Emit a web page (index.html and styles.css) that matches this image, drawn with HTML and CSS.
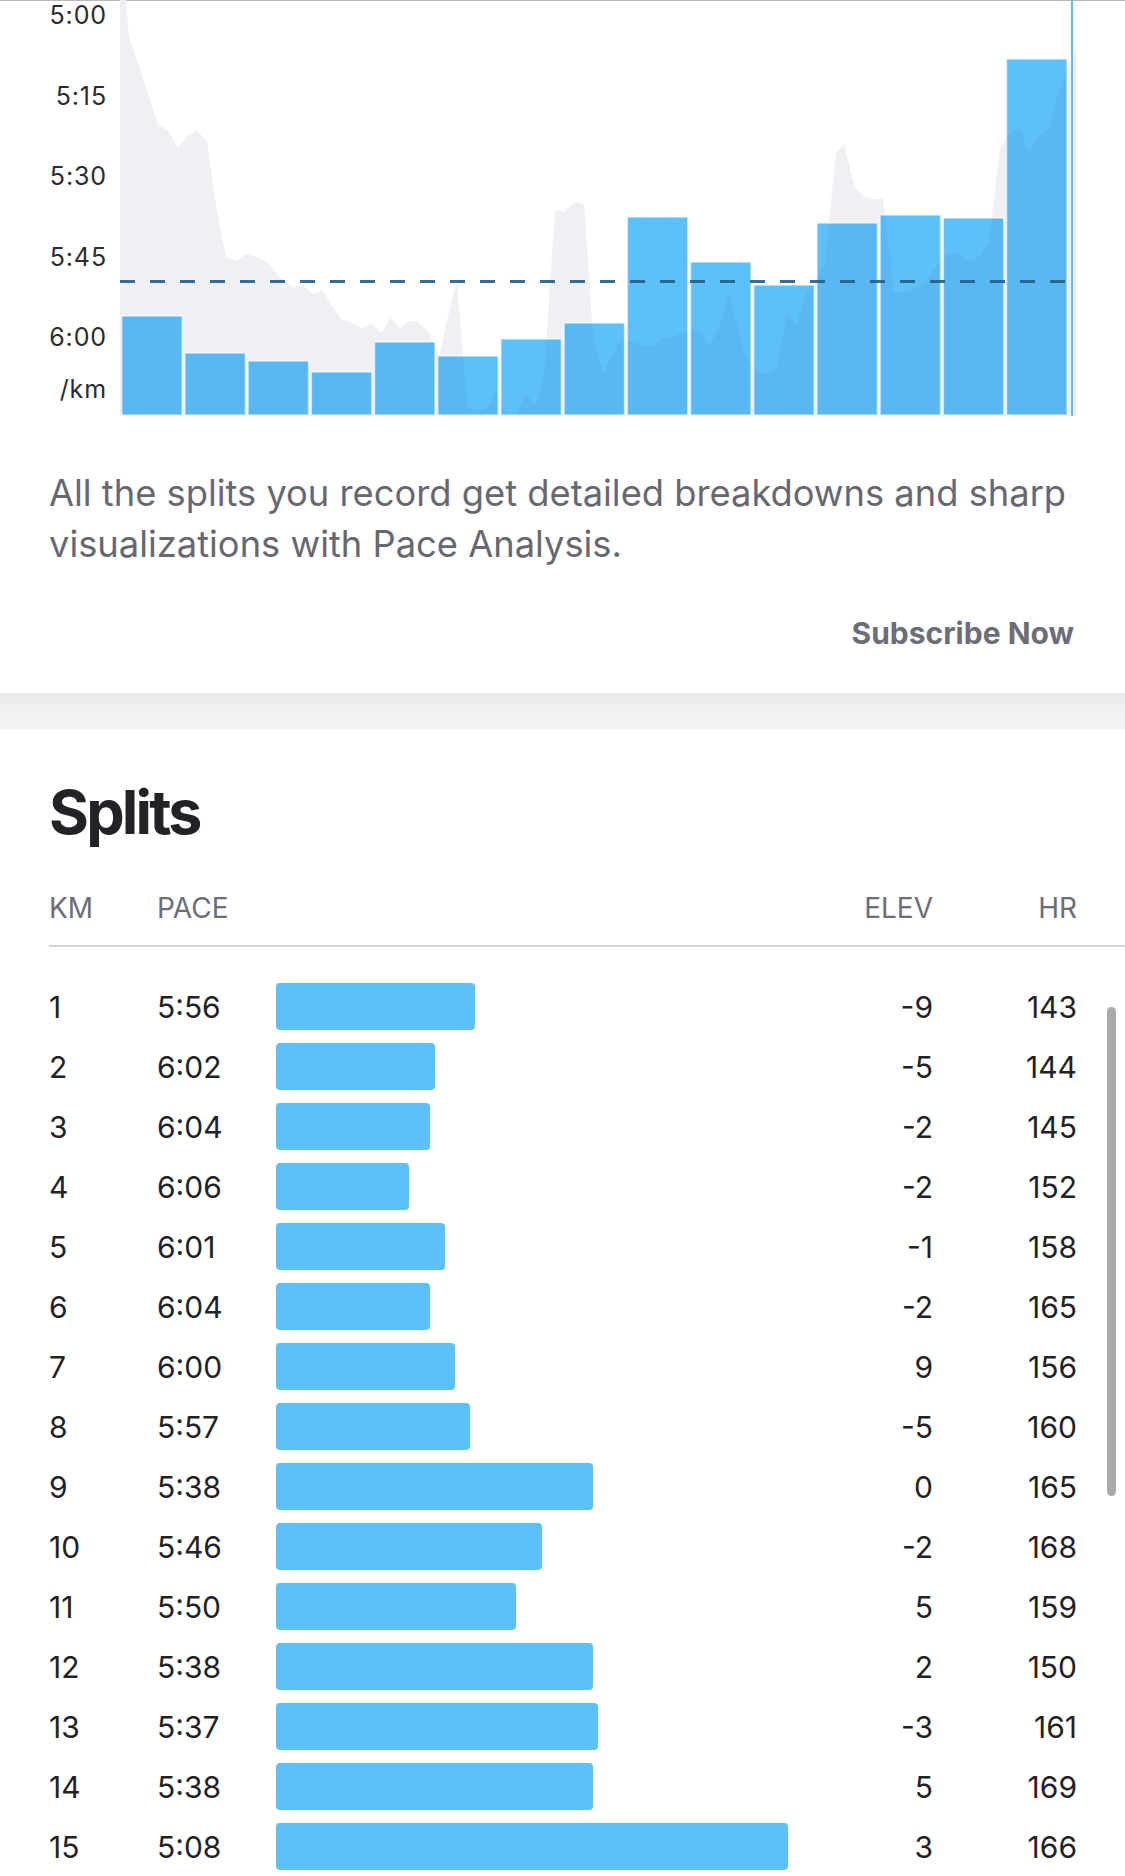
FILE: index.html
```html
<!DOCTYPE html>
<html lang="en">
<head>
<meta charset="utf-8">
<title>Pace Analysis – Splits</title>
<link rel="stylesheet" href="styles.css">
</head>
<body>
<section class="analysis">
  <div class="chart">
    <div class="yaxis">
      <div class="ylabel">5:00</div>
      <div class="ylabel">5:15</div>
      <div class="ylabel">5:30</div>
      <div class="ylabel">5:45</div>
      <div class="ylabel">6:00</div>
      <div class="ylabel unit">/km</div>
    </div>
    <svg class="plot" width="960" height="417" viewBox="0 0 960 417">
      <polygon class="area" points="0,0 6,0 9,37 17,60 27,90 38,125 48,130 58,148 68,135 77,130 87,142 97,212 106,257 116,261 126,254 137,257 147,262 160,277 173,288 183,285 193,294 202,290 212,305 222,320 232,323 242,328 252,324 262,333 270,318 280,328 289,321 298,321 309,333 319,357 330,308 337,282 347,407 359,411 367,407 377,390 386,416 396,416 406,393 415,406 424,378 429,300 435,211 444,211 455,202 464,204 473,337 483,373 494,352 502,337 511,342 532,347 541,338 553,337 571,328 580,331 589,347 599,327 609,294 623,348 634,370 645,374 657,368 667,312 676,325 687,292 693,287 705,262 716,153 724,144 735,188 745,197 754,199 763,199 774,292 785,292 795,289 805,283 814,268 826,254 839,254 851,261 860,256 869,242 880,147 888,135 900,128 908,153 919,136 930,127 936,100 956,49 956,416 0,416"/>
      <g class="bars">
        <rect x="1.7" y="316" width="60.5" height="99"/>
        <rect x="64.9" y="353" width="60.5" height="62"/>
        <rect x="128.1" y="361" width="60.5" height="54"/>
        <rect x="191.3" y="372" width="60.5" height="43"/>
        <rect x="254.5" y="342" width="60.5" height="73"/>
        <rect x="317.7" y="356" width="60.5" height="59"/>
        <rect x="380.9" y="339" width="60.5" height="76"/>
        <rect x="444.1" y="323" width="60.5" height="92"/>
        <rect x="507.3" y="217" width="60.5" height="198"/>
        <rect x="570.5" y="262" width="60.5" height="153"/>
        <rect x="633.7" y="285" width="60.5" height="130"/>
        <rect x="696.9" y="223" width="60.5" height="192"/>
        <rect x="760.1" y="215" width="60.5" height="200"/>
        <rect x="823.3" y="218" width="60.5" height="197"/>
        <rect x="886.5" y="59" width="60.5" height="356"/>
      </g>
      <polygon class="area-shade" points="0,0 6,0 9,37 17,60 27,90 38,125 48,130 58,148 68,135 77,130 87,142 97,212 106,257 116,261 126,254 137,257 147,262 160,277 173,288 183,285 193,294 202,290 212,305 222,320 232,323 242,328 252,324 262,333 270,318 280,328 289,321 298,321 309,333 319,357 330,308 337,282 347,407 359,411 367,407 377,390 386,416 396,416 406,393 415,406 424,378 429,300 435,211 444,211 455,202 464,204 473,337 483,373 494,352 502,337 511,342 532,347 541,338 553,337 571,328 580,331 589,347 599,327 609,294 623,348 634,370 645,374 657,368 667,312 676,325 687,292 693,287 705,262 716,153 724,144 735,188 745,197 754,199 763,199 774,292 785,292 795,289 805,283 814,268 826,254 839,254 851,261 860,256 869,242 880,147 888,135 900,128 908,153 919,136 930,127 936,100 956,49 956,416 0,416"/>
      <g class="bar-edges">
        <rect x="1.7" y="316" width="60.5" height="99"/>
        <rect x="64.9" y="353" width="60.5" height="62"/>
        <rect x="128.1" y="361" width="60.5" height="54"/>
        <rect x="191.3" y="372" width="60.5" height="43"/>
        <rect x="254.5" y="342" width="60.5" height="73"/>
        <rect x="317.7" y="356" width="60.5" height="59"/>
        <rect x="380.9" y="339" width="60.5" height="76"/>
        <rect x="444.1" y="323" width="60.5" height="92"/>
        <rect x="507.3" y="217" width="60.5" height="198"/>
        <rect x="570.5" y="262" width="60.5" height="153"/>
        <rect x="633.7" y="285" width="60.5" height="130"/>
        <rect x="696.9" y="223" width="60.5" height="192"/>
        <rect x="760.1" y="215" width="60.5" height="200"/>
        <rect x="823.3" y="218" width="60.5" height="197"/>
        <rect x="886.5" y="59" width="60.5" height="356"/>
      </g>
      <line class="avg" x1="0" y1="281.5" x2="945" y2="281.5"/>
      <line class="cursor" x1="952" y1="0" x2="952" y2="416"/>
    </svg>
  </div>
  <p class="promo">All the splits you record get detailed breakdowns and sharp visualizations with Pace Analysis.</p>
  <div class="cta-row"><a class="cta" href="#">Subscribe Now</a></div>
</section>

<div class="divider"></div>

<section class="splits">
  <h2 class="title">Splits</h2>
  <div class="thead">
    <div class="c-km">KM</div>
    <div class="c-pace">PACE</div>
    <div class="c-bar"></div>
    <div class="c-elev">ELEV</div>
    <div class="c-hr">HR</div>
  </div>
  <div class="rows">
    <div class="row"><div class="c-km">1</div><div class="c-pace">5:56</div><div class="c-bar"><span class="bar" style="width:199px"></span></div><div class="c-elev">-9</div><div class="c-hr">143</div></div>
    <div class="row"><div class="c-km">2</div><div class="c-pace">6:02</div><div class="c-bar"><span class="bar" style="width:159px"></span></div><div class="c-elev">-5</div><div class="c-hr">144</div></div>
    <div class="row"><div class="c-km">3</div><div class="c-pace">6:04</div><div class="c-bar"><span class="bar" style="width:154px"></span></div><div class="c-elev">-2</div><div class="c-hr">145</div></div>
    <div class="row"><div class="c-km">4</div><div class="c-pace">6:06</div><div class="c-bar"><span class="bar" style="width:133px"></span></div><div class="c-elev">-2</div><div class="c-hr">152</div></div>
    <div class="row"><div class="c-km">5</div><div class="c-pace">6:01</div><div class="c-bar"><span class="bar" style="width:169px"></span></div><div class="c-elev">-1</div><div class="c-hr">158</div></div>
    <div class="row"><div class="c-km">6</div><div class="c-pace">6:04</div><div class="c-bar"><span class="bar" style="width:154px"></span></div><div class="c-elev">-2</div><div class="c-hr">165</div></div>
    <div class="row"><div class="c-km">7</div><div class="c-pace">6:00</div><div class="c-bar"><span class="bar" style="width:179px"></span></div><div class="c-elev">9</div><div class="c-hr">156</div></div>
    <div class="row"><div class="c-km">8</div><div class="c-pace">5:57</div><div class="c-bar"><span class="bar" style="width:194px"></span></div><div class="c-elev">-5</div><div class="c-hr">160</div></div>
    <div class="row"><div class="c-km">9</div><div class="c-pace">5:38</div><div class="c-bar"><span class="bar" style="width:317px"></span></div><div class="c-elev">0</div><div class="c-hr">165</div></div>
    <div class="row"><div class="c-km">10</div><div class="c-pace">5:46</div><div class="c-bar"><span class="bar" style="width:266px"></span></div><div class="c-elev">-2</div><div class="c-hr">168</div></div>
    <div class="row"><div class="c-km">11</div><div class="c-pace">5:50</div><div class="c-bar"><span class="bar" style="width:240px"></span></div><div class="c-elev">5</div><div class="c-hr">159</div></div>
    <div class="row"><div class="c-km">12</div><div class="c-pace">5:38</div><div class="c-bar"><span class="bar" style="width:317px"></span></div><div class="c-elev">2</div><div class="c-hr">150</div></div>
    <div class="row"><div class="c-km">13</div><div class="c-pace">5:37</div><div class="c-bar"><span class="bar" style="width:322px"></span></div><div class="c-elev">-3</div><div class="c-hr">161</div></div>
    <div class="row"><div class="c-km">14</div><div class="c-pace">5:38</div><div class="c-bar"><span class="bar" style="width:317px"></span></div><div class="c-elev">5</div><div class="c-hr">169</div></div>
    <div class="row"><div class="c-km">15</div><div class="c-pace">5:08</div><div class="c-bar"><span class="bar" style="width:512px"></span></div><div class="c-elev">3</div><div class="c-hr">166</div></div>
  </div>
</section>

<div class="scroll-indicator"></div>
</body>
</html>
```

FILE: styles.css
```css
* { box-sizing: border-box; }

html, body {
  margin: 0;
  padding: 0;
  background: #ffffff;
}

body {
  position: relative;
  width: 1125px;
  height: 1876px;
  overflow: hidden;
  font-family: Inter, "Noto Sans", "Liberation Sans", sans-serif;
  color: #222226;
}

/* ---------- analysis / chart ---------- */
.analysis {
  border-top: 1px solid #b8b8bc;
  padding-bottom: 42px;
}

.chart {
  display: flex;
  gap: 13px;
  margin-top: -1px;
}

.yaxis {
  width: 107px;
  display: flex;
  flex-direction: column;
  align-items: flex-end;
}

.ylabel {
  height: 31px;
  line-height: 31px;
  margin-bottom: 49.5px;
  font-size: 25px;
  letter-spacing: 0.9px;
  color: #2b2b30;
}

.ylabel:nth-child(5) { margin-bottom: 20.5px; }
.ylabel.unit { margin-bottom: 0; }

.plot { display: block; flex: none; }

.area { fill: #fafafc; }
.area-shade { fill: #0a1e3c; fill-opacity: 0.045; }
.bars rect { fill: #5ec0f9; }
.bar-edges rect {
  fill: none;
  stroke: #ffffff;
  stroke-opacity: 0.55;
  stroke-width: 1.6;
}
.avg {
  stroke: #23618a;
  stroke-opacity: 0.92;
  stroke-width: 3;
  stroke-dasharray: 15 15;
}
.cursor {
  stroke: #5ec0f9;
  stroke-width: 2;
}

.promo {
  margin: 51px 0 0;
  padding: 0 30px 0 49px;
  font-size: 36.3px;
  line-height: 51px;
  font-weight: 400;
  color: #67676f;
}

.cta-row {
  display: flex;
  justify-content: flex-end;
  padding-right: 51px;
  margin-top: 45px;
}

.cta {
  font-size: 30px;
  line-height: 36px;
  font-weight: 700;
  color: #6d6d78;
  text-decoration: none;
}

.divider {
  height: 36px;
  background: linear-gradient(#eaeaec, #f2f2f4 60%, #f3f3f5);
}

/* ---------- splits ---------- */
.splits {
  padding: 51.5px 0 0 49px;
}

.title {
  margin: 0;
  font-size: 61px;
  line-height: 62px;
  font-weight: 700;
  letter-spacing: -2.8px;
  color: #232327;
}

.thead,
.row {
  display: grid;
  grid-template-columns: 108px 119px 1fr 80px 144px;
  align-items: center;
}

.thead {
  margin-top: 48.5px;
  padding: 0 48px 20px 0;
  border-bottom: 2px solid #d4d4dc;
  font-size: 28px;
  line-height: 34px;
  color: #6d6d78;
}

.rows {
  padding: 29.5px 48px 0 0;
}

.row {
  height: 60px;
  font-size: 30px;
  line-height: 36px;
  color: #222226;
}

.c-elev, .c-hr { text-align: right; }

.c-bar { display: flex; align-items: center; }

.bar {
  display: block;
  height: 47px;
  background: #5ec0f9;
  border-radius: 4px;
}

.scroll-indicator {
  position: absolute;
  left: 1107px;
  top: 1007px;
  width: 9px;
  height: 489px;
  border-radius: 5px;
  background: #a9a9ab;
}
```
